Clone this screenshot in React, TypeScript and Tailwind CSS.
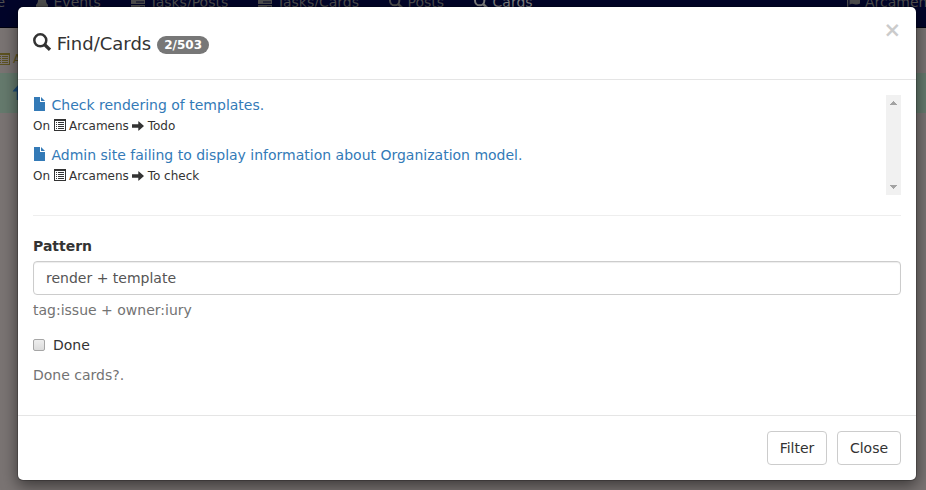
import React, { useState } from "react";

type IconProps = { className?: string };

const SearchIcon = ({ className = "" }: IconProps) => (
  <svg viewBox="0 0 18 18" className={className} fill="none" stroke="currentColor">
    <circle cx="7.300" cy="7.300" r="6" strokeWidth="2.500" />
    <path d="M11.500 11.500 17 16.800" strokeWidth="3.300" />
  </svg>
);

const FileIcon = ({ className = "" }: IconProps) => (
  <svg viewBox="0 0 14 14" className={className} fill="currentColor">
    <path d="M1 0h6v5h5v8.500a.5.5 0 0 1-.5.5h-10a.5.5 0 0 1-.5-.5zM8 0l4 4H8z" />
  </svg>
);

const ListIcon = ({ className = "" }: IconProps) => (
  <svg viewBox="0 0 12 12" className={className} fill="currentColor" shapeRendering="crispEdges">
    <path fillRule="evenodd" d="M0 0h12v12H0zM1 2v9h10V2z" />
    <path d="M2 3h1v1H2zM4 3h6v1H4zM2 5h1v1H2zM4 5h6v1H4zM2 7h1v1H2zM4 7h6v1H4zM2 9h1v1H2zM4 9h6v1H4z" />
  </svg>
);

const ArrowIcon = ({ className = "" }: IconProps) => (
  <svg viewBox="0 0 12 12" className={className} fill="currentColor">
    <path d="M0 4.300h6.300V1.700c0-.4.3-.5.6-.2L12 6l-5.100 4.500c-.3.3-.6.2-.6-.2V7.700H0z" />
  </svg>
);

const BellIcon = ({ className = "" }: IconProps) => (
  <svg viewBox="0 0 14 14" className={className} fill="currentColor">
    <path d="M7 0c.7 0 1.200.5 1.200 1.300C10 1.800 11 3.300 11 5c0 2.500.8 4 2 4.800V12H1V9.800C2.200 9 3 7.500 3 5c0-1.700 1-3.200 2.800-3.700C5.800.5 6.300 0 7 0zM5 12.500h4c-.3 1-1 1.500-2 1.500s-1.700-.5-2-1.500z" />
  </svg>
);

const TasksIcon = ({ className = "" }: IconProps) => (
  <svg viewBox="0 0 14 14" className={className} fill="currentColor">
    <path fillRule="evenodd" d="M0 0h14v4H0zM8 1.500v1h5v-1zM0 5h14v4H0zM5 6.500v1h8v-1zM0 10h14v4H0zM9 11.500v1h4v-1z" />
  </svg>
);

const FlagIcon = ({ className = "" }: IconProps) => (
  <svg viewBox="0 0 14 14" className={className} fill="currentColor">
    <path d="M0 0h1.300v14H0zM2.500 1.500c3-1.500 4 .8 6.500.5 1.500-.2 3-.8 4-1v7.500c-2 .8-3.500 1.500-5.500.8-2-.7-3-.8-5 .4z" />
  </svg>
);

const navItems = [
  { label: "Events", Icon: BellIcon, active: false },
  { label: "Tasks/Posts", Icon: TasksIcon, active: false },
  { label: "Tasks/Cards", Icon: TasksIcon, active: false },
  { label: "Posts", Icon: SearchIcon, active: false },
  { label: "Cards", Icon: SearchIcon, active: true },
];

const cards = [
  { title: "Check rendering of templates.", board: "Arcamens", list: "Todo" },
  {
    title: "Admin site failing to display information about Organization model.",
    board: "Arcamens",
    list: "To check",
  },
];

function Backdrop() {
  return (
    <div className="h-full bg-[#7a7473]">
      <nav className="flex h-7 overflow-hidden whitespace-nowrap border-b border-[#01020f] bg-[#02052a] text-sm leading-5 text-[#4f4f4f]">
        <div className="-mt-2 flex w-5 justify-end pr-[15px]">Home</div>
        {navItems.map(({ label, Icon, active }) => (
          <div
            key={label}
            className={`-mt-2 flex items-start px-[15px] ${active ? "text-[#808080]" : ""}`}
          >
            <Icon className="mr-[4.500px] mt-[3px] size-3.5" />
            {label}
          </div>
        ))}
        <div className="-mt-2 ml-auto flex w-[79px] shrink-0 items-start">
          <FlagIcon className="mr-[4px] mt-[3px] size-3.5 shrink-0" />
          Arcamens
        </div>
      </nav>
      <div className="flex h-[45px] items-start pt-[25px] text-xs leading-3 text-[#5c5220]">
        <ListIcon className="-ml-0.5 mr-[3px] size-3" />
        Arcamens
      </div>
      <div className="flex h-10 items-start bg-[#657a6d] pl-[11px] pt-[11px] text-[#1a4a78]">
        <ArrowIcon className="size-4 -rotate-90" />
      </div>
    </div>
  );
}

export default function App() {
  const [pattern, setPattern] = useState("render + template");

  return (
    <div className="relative h-[490px] w-[926px] overflow-hidden font-['DejaVu_Sans',sans-serif] text-sm leading-5 text-[#333]">
      <Backdrop />
      <div
        role="dialog"
        className="absolute left-[17px] top-1.5 w-[900px] rounded-md border border-black/20 bg-white bg-clip-padding shadow-[0_5px_15px_rgba(0,0,0,0.5)]"
      >
        <header className="flex h-[73px] items-start justify-between border-b border-[#e5e5e5] px-[15px]">
          <h4 className="flex items-start pt-[27px] text-lg leading-5">
            <SearchIcon className="-mt-px mr-[5.800px] size-[18px]" />
            Find/Cards
            <span className="ml-1.5 mt-0.5 rounded-[10px] bg-[#777] px-[7px] py-[3px] text-xs font-bold leading-3 text-white">
              2/503
            </span>
          </h4>
          <button
            aria-label="Dismiss"
            className="mt-[13px] text-[21px] font-bold leading-[21px] text-black opacity-20"
          >
            ×
          </button>
        </header>

        <main className="h-[335px] p-[15px]">
          <div className="flex h-[100px] justify-between">
            <ul>
              {cards.map((card) => (
                <li key={card.title} className="h-[50px]">
                  <a className="flex items-start text-[#337ab7]">
                    <FileIcon className="mr-[4.500px] mt-0.5 size-3.5" />
                    {card.title}
                  </a>
                  <div className="flex items-start pt-px text-xs leading-[21px]">
                    On
                    <ListIcon className="ml-1 mr-[3px] mt-[3px] size-3" />
                    {card.board}
                    <ArrowIcon className="ml-[3px] mr-[3.800px] mt-[3.500px] size-3" />
                    {card.list}
                  </div>
                </li>
              ))}
            </ul>
            <div className="flex w-[15px] flex-col items-center justify-between bg-[#f1f1f1] py-1.5 text-[#a3a3a3]">
              <svg viewBox="0 0 7 4" className="h-1 w-[7px]" fill="currentColor" shapeRendering="crispEdges">
                <path d="M3 0h1v1h1v1h1v1h1v1H0V3h1V2h1V1h1z" />
              </svg>
              <svg viewBox="0 0 7 4" className="h-1 w-[7px]" fill="currentColor" shapeRendering="crispEdges">
                <path d="M0 0h7v1H6v1H5v1H4v1H3V3H2V2H1V1H0z" />
              </svg>
            </div>
          </div>
          <hr className="my-5 border-[#eee]" />
          <label htmlFor="pattern" className="mb-[5px] block font-bold">
            Pattern
          </label>
          <input
            id="pattern"
            value={pattern}
            onChange={(event) => setPattern(event.target.value)}
            className="block h-[34px] w-full rounded border border-[#ccc] bg-white px-3 py-1.5 text-[#555] shadow-[inset_0_1px_1px_rgba(0,0,0,0.075)] outline-none"
          />
          <p className="mt-[5px] text-[#737373]">tag:issue + owner:iury</p>
          <label className="mt-[15px] flex items-start">
            <input
              type="checkbox"
              className="mr-2 mt-1 size-3 appearance-none rounded-[2px] border border-[#a6a6a6] bg-linear-to-b from-[#eee] to-[#dcdcdc]"
            />
            Done
          </label>
          <p className="mt-2.5 text-[#737373]">Done cards?.</p>
        </main>

        <footer className="flex h-[65px] justify-end gap-2.5 border-t border-[#e5e5e5] p-[15px]">
          <button className="h-[34px] w-[60px] rounded border border-[#ccc] bg-white">Filter</button>
          <button className="h-[34px] w-16 rounded border border-[#ccc] bg-white">Close</button>
        </footer>
      </div>
    </div>
  );
}
